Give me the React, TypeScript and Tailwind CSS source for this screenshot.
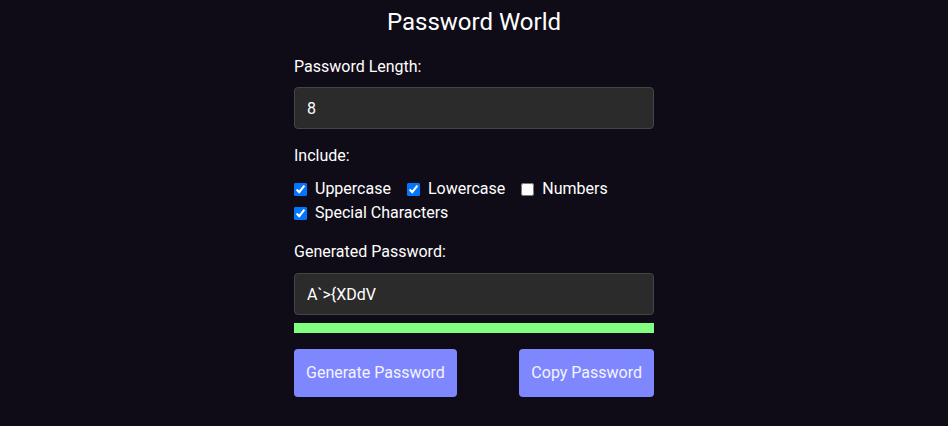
import { useState } from 'react';

export default function App() {
  const [length, setLength] = useState('8');
  const [password] = useState('A`>{XDdV');

  const options = [
    { id: 'upper', label: 'Uppercase', checked: true },
    { id: 'lower', label: 'Lowercase', checked: true },
    { id: 'numbers', label: 'Numbers', checked: false },
    { id: 'special', label: 'Special Characters', checked: true },
  ];

  return (
    <div className="min-h-screen bg-[#0f0c17] text-white font-['Roboto',sans-serif]">
      <div className="mx-auto w-[360px] pt-[8px] flex flex-col">
        <h1 className="text-[24px] leading-[28px] text-center -mx-10">Password World</h1>

        <label className="mt-[21px] text-[16px] leading-[20px]">Password Length:</label>
        <input
          value={length}
          onChange={(e) => setLength(e.target.value)}
          className="mt-[10px] h-[42px] w-full rounded-[4px] border border-[#454545] bg-[#2b2b2b] px-[12px] text-[16px] text-white outline-none"
        />

        <div className="mt-[17px] text-[16px] leading-[20px]">Include:</div>
        <div className="mt-[11px] flex flex-wrap gap-x-4">
          {options.map((o) => (
            <label key={o.id} className="flex items-center gap-[8px] h-[24px] text-[16px]">
              <input type="checkbox" defaultChecked={o.checked} className="m-0 h-[13px] w-[13px]" />
              {o.label}
            </label>
          ))}
        </div>

        <label className="mt-[17px] text-[16px] leading-[20px]">Generated Password:</label>
        <input
          readOnly
          value={password}
          className="mt-[11px] h-[42px] w-full rounded-[4px] border border-[#454545] bg-[#2b2b2b] px-[12px] text-[16px] text-white outline-none"
        />
        <div className="mt-[8px] h-[10px] w-full bg-[#80ff80]" />

        <div className="mt-[16px] flex justify-between">
          <button className="h-[48px] rounded-[4px] bg-[#7f87ff] px-[12px] text-[16px] text-[#f4f4ff]">Generate Password</button>
          <button className="h-[48px] rounded-[4px] bg-[#7f87ff] px-[12px] text-[16px] text-[#f4f4ff]">Copy Password</button>
        </div>
      </div>
    </div>
  );
}
